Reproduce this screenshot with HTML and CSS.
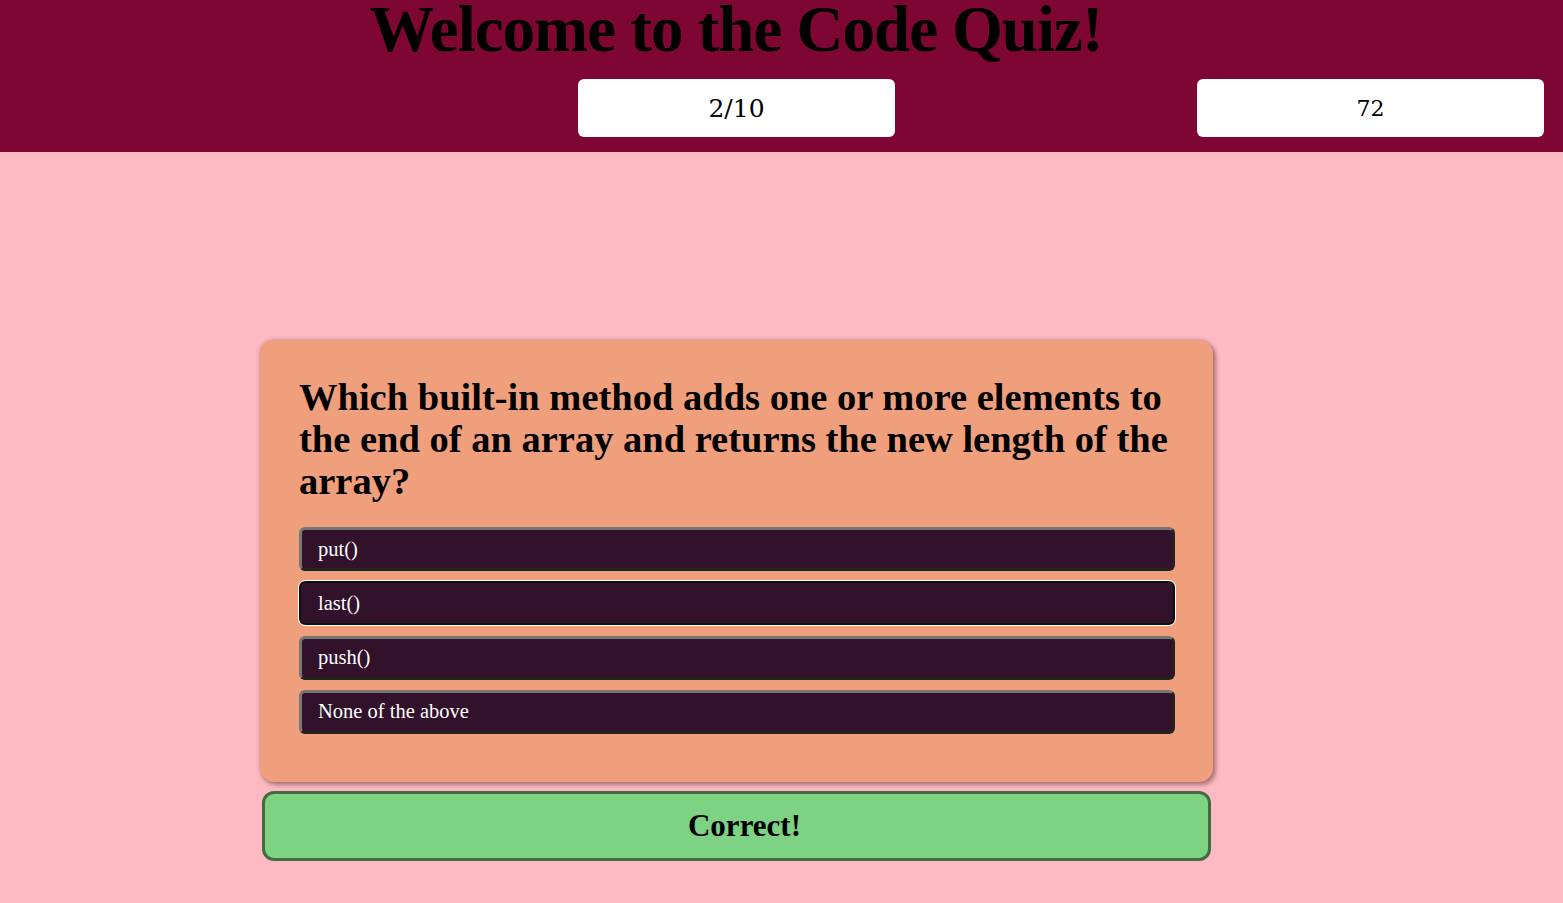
FILE: index.html
```html
<!DOCTYPE html>
<html lang="en">
<head>
<meta charset="utf-8">
<title>Code Quiz</title>
<link rel="stylesheet" href="styles.css">
</head>
<body>
<header class="header">
  <h1 class="title">Welcome to the Code Quiz!</h1>
  <div class="stats">
    <div class="stat stat-progress">2/10</div>
    <div class="stat stat-time">72</div>
  </div>
</header>
<main class="main">
  <section class="card">
    <h2 class="question">Which built-in method adds one or more elements to the end of an array and returns the new length of the array?</h2>
    <div class="answers">
      <button class="answer">put()</button>
      <button class="answer focused">last()</button>
      <button class="answer">push()</button>
      <button class="answer">None of the above</button>
    </div>
  </section>
  <div class="result">Correct!</div>
</main>
</body>
</html>
```

FILE: styles.css
```css
* { box-sizing: border-box; }
html, body { margin: 0; padding: 0; }
body {
  background: #fdbac2;
  font-family: "Liberation Serif", serif;
  min-height: 903px;
}
.header {
  background: #7e0633;
  height: 152px;
  display: flex;
  flex-direction: column;
}
.title {
  margin: 0;
  padding-right: 91px;
  text-align: center;
  font-family: "Liberation Serif", serif;
  font-weight: bold;
  font-size: 65px;
  letter-spacing: -1px;
  line-height: 58px;
  height: 64px;
  white-space: nowrap;
  color: #000;
}
.stats {
  display: grid;
  grid-template-columns: 578px 317px 1fr 347px;
  padding-right: 19px;
  margin-top: 15px;
}
.stat {
  background: #fff;
  height: 58px;
  border-radius: 6px;
  display: flex;
  align-items: center;
  justify-content: center;
  color: #000;
}
.stat-progress {
  grid-column: 2;
  font-family: "DejaVu Serif", serif;
  font-size: 25px;
}
.stat-time {
  grid-column: 4;
  font-family: "DejaVu Serif", serif;
  font-size: 22px;
}
.main {
  display: flex;
  flex-direction: column;
  align-items: center;
  padding-right: 90px;
  padding-top: 188px;
}
.card {
  width: 953px;
  background: #f09f7d;
  border-radius: 14px;
  box-shadow: 3px 3px 4px rgba(100, 50, 60, 0.45), 0 0 4px rgba(100, 50, 60, 0.35);
  padding: 36px 38px 48px 39px;
}
.question {
  margin: 0 0 25px 0;
  font-family: "Liberation Serif", serif;
  font-weight: bold;
  font-size: 38.5px;
  line-height: 42px;
  color: #000;
}
.answers {
  display: flex;
  flex-direction: column;
  gap: 10.3px;
}
.answer {
  display: block;
  width: 100%;
  height: 44px;
  text-align: left;
  background: #32112a;
  color: #fff;
  font-family: "Liberation Serif", serif;
  font-size: 20.5px;
  padding: 0 16px;
  border: 3px solid;
  border-color: #767676 #222 #222 #767676;
  border-radius: 6px;
}
.answer.focused {
  border: 2px solid #101010;
  outline: 1px solid #fff;
  padding-left: 17px;
}
.result {
  margin-top: 9px;
  width: 949px;
  height: 70px;
  padding-left: 16px;
  background: #7dd283;
  border: 3px solid #426b42;
  border-radius: 12px;
  display: flex;
  align-items: center;
  justify-content: center;
  font-family: "Liberation Serif", serif;
  font-weight: bold;
  font-size: 31px;
  color: #000;
}
```
